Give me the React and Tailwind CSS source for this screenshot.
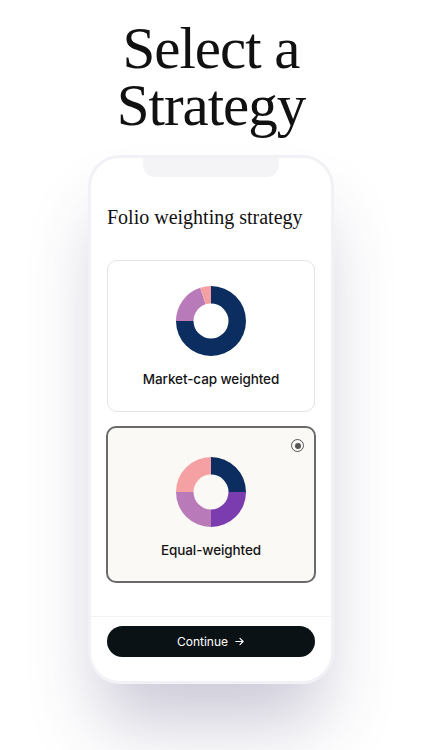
import React from "react";

// angle in degrees, 0 = 12 o'clock, clockwise
function pt(cx, cy, r, a) {
  const rad = ((a - 90) * Math.PI) / 180;
  return [cx + r * Math.cos(rad), cy + r * Math.sin(rad)];
}

function slice(cx, cy, r, R, a0, a1) {
  const large = a1 - a0 > 180 ? 1 : 0;
  const [x0, y0] = pt(cx, cy, R, a0);
  const [x1, y1] = pt(cx, cy, R, a1);
  const [x2, y2] = pt(cx, cy, r, a1);
  const [x3, y3] = pt(cx, cy, r, a0);
  return `M${x0} ${y0} A${R} ${R} 0 ${large} 1 ${x1} ${y1} L${x2} ${y2} A${r} ${r} 0 ${large} 0 ${x3} ${y3} Z`;
}

function Donut({ parts }) {
  let start = 0;
  return (
    <svg width="72" height="72" viewBox="0 0 72 72">
      {parts.map((p, i) => {
        const d = slice(36, 36, 17.5, 35, start, start + p.deg);
        start += p.deg;
        return <path key={i} d={d} fill={p.color} />;
      })}
    </svg>
  );
}

const NAVY = "#0b2d5f";
const LAVENDER = "#b87ab8";
const PINK = "#f5a0a2";
const PURPLE = "#7a3cae";

function StrategyCard({ label, parts, selected }) {
  return (
    <div
      className={
        selected
          ? "relative -mx-px rounded-[10px] border-2 border-[#6a6a6a] bg-[#fbf9f6] pt-[28px] pb-[21px] flex flex-col items-center"
          : "relative rounded-[10px] border border-[#e4e4e4] bg-white pt-[24px] pb-[22px] flex flex-col items-center"
      }
    >
      {selected && (
        <div className="absolute right-[10px] top-[11px] w-[13px] h-[13px] rounded-full border-[1.5px] border-[#555] flex items-center justify-center">
          <div className="w-[6px] h-[6px] rounded-full bg-[#555]" />
        </div>
      )}
      <Donut parts={parts} />
      <p className="mt-[12px] text-[13.5px] leading-[20px] font-medium text-[#141414] font-['Inter',sans-serif] tracking-[-0.1px]">
        {label}
      </p>
    </div>
  );
}

export default function App() {
  return (
    <div className="w-[422px] h-[750px] bg-white overflow-hidden flex flex-col items-center">
      {/* Headline */}
      <h1 className="mt-[20px] text-center text-[59px] leading-[57px] tracking-[-1px] text-[#111] font-['Liberation_Serif',serif]">
        Select a
        <br />
        Strategy
      </h1>

      {/* Phone */}
      <div className="mt-[21px] w-[246px] h-[529px] rounded-[32px] border-[3px] border-[#f2f2f6] bg-white shadow-[0_50px_70px_-12px_rgba(70,60,110,0.28)] flex flex-col overflow-hidden">
        <div className="mx-auto w-[136px] h-[19px] rounded-b-[12px] bg-[#f4f4f7]" />

        <div className="px-[16px] flex flex-col">
          <h2 className="mt-[27px] text-[20px] leading-[26px] text-[#111] font-['Liberation_Serif',serif]">
            Folio weighting strategy
          </h2>

          <div className="mt-[30px] flex flex-col gap-[14px]">
            <StrategyCard
              label="Market-cap weighted"
              parts={[
                { deg: 270, color: NAVY },
                { deg: 72, color: LAVENDER },
                { deg: 18, color: PINK },
              ]}
            />
            <StrategyCard
              selected
              label="Equal-weighted"
              parts={[
                { deg: 90, color: NAVY },
                { deg: 90, color: PURPLE },
                { deg: 90, color: LAVENDER },
                { deg: 90, color: PINK },
              ]}
            />
          </div>
        </div>

        <div className="mt-auto border-t border-[#f3f3f3] px-[16px] pt-[9px] pb-[24px]">
          <button className="w-full h-[31px] rounded-full bg-[#0a1215] flex items-center justify-center gap-[6px] text-white text-[12px] font-['Inter',sans-serif]">
            Continue
            <svg width="11" height="11" viewBox="0 0 12 12" fill="none" stroke="white" strokeWidth="1.2" strokeLinecap="round" strokeLinejoin="round">
              <path d="M2 6h8M6.5 2.5 10 6l-3.5 3.5" />
            </svg>
          </button>
        </div>
      </div>
    </div>
  );
}
